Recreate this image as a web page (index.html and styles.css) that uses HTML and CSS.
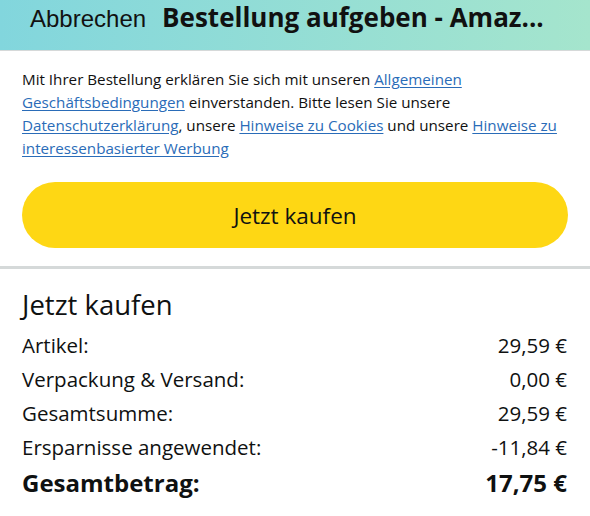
FILE: index.html
```html
<!DOCTYPE html>
<html lang="de">
<head>
<meta charset="UTF-8">
<meta name="viewport" content="width=device-width, initial-scale=1.0">
<title>Bestellung aufgeben - Amazon</title>
<link rel="stylesheet" href="styles.css">
</head>
<body>
<!-- Kopfzeile -->
<div class="topbar">
    <span class="cancel">Abbrechen</span>
    <span class="title">Bestellung aufgeben - Amaz...</span>
</div>

<div class="content">
    <p class="legal">Mit Ihrer Bestellung erklären Sie sich mit unseren <a href="#">Allgemeinen Geschäftsbedingungen</a> einverstanden. Bitte lesen Sie unsere <a href="#">Datenschutzerklärung</a>, unsere <a href="#">Hinweise zu Cookies</a> und unsere <a href="#">Hinweise zu interessenbasierter Werbung</a></p>
    <button class="buy">Jetzt kaufen</button>
</div>

<div class="divider"></div>

<!-- Zusammenfassung -->
<div class="summary">
    <h2>Jetzt kaufen</h2>
    <div class="row"><span>Artikel:</span><span>29,59 €</span></div>
    <div class="row"><span>Verpackung &amp; Versand:</span><span>0,00 €</span></div>
    <div class="row"><span>Gesamtsumme:</span><span>29,59 €</span></div>
    <div class="row"><span>Ersparnisse angewendet:</span><span>-11,84 €</span></div>
    <div class="row total"><span>Gesamtbetrag:</span><span>17,75 €</span></div>
</div>
</body>
</html>
```
FILE: styles.css
```css
body {margin:0;padding:0;font-family:"Open Sans","Noto Sans",sans-serif;background:#fff;color:#0f1111;}
.topbar {height:51px;box-sizing:border-box;padding:2px 0 0 30px;display:flex;align-items:baseline;gap:16px;background:linear-gradient(90deg,#82d6dd,#a5e5cd);border-bottom:1px solid #d6d9d9;white-space:nowrap;overflow:hidden;}
.cancel {font-family:"Liberation Sans",Arial,sans-serif;font-size:24px;line-height:30px;color:#111;}
.title {font-size:26px;font-weight:700;line-height:30px;color:#111;}
.content {padding:17px 22px 0;}
.legal {margin:0;font-size:15.2px;line-height:23px;color:#111;}
.legal a {color:#2a6cb8;text-decoration:underline;text-underline-offset:2px;}
.buy {display:block;width:100%;height:66px;margin-top:22px;border:none;border-radius:33px;background:#fed714;font-family:inherit;font-size:22.5px;color:#0f1111;cursor:pointer;}
.divider {height:3px;background:#d5d9d9;margin-top:18px;}
.summary {padding:18px 23px 0 22px;}
.summary h2 {margin:0 0 5px;font-size:27.5px;font-weight:400;line-height:36px;}
.row {display:flex;justify-content:space-between;font-size:20.5px;line-height:34px;}
.row.total {font-size:24px;font-weight:700;line-height:38px;}
```
